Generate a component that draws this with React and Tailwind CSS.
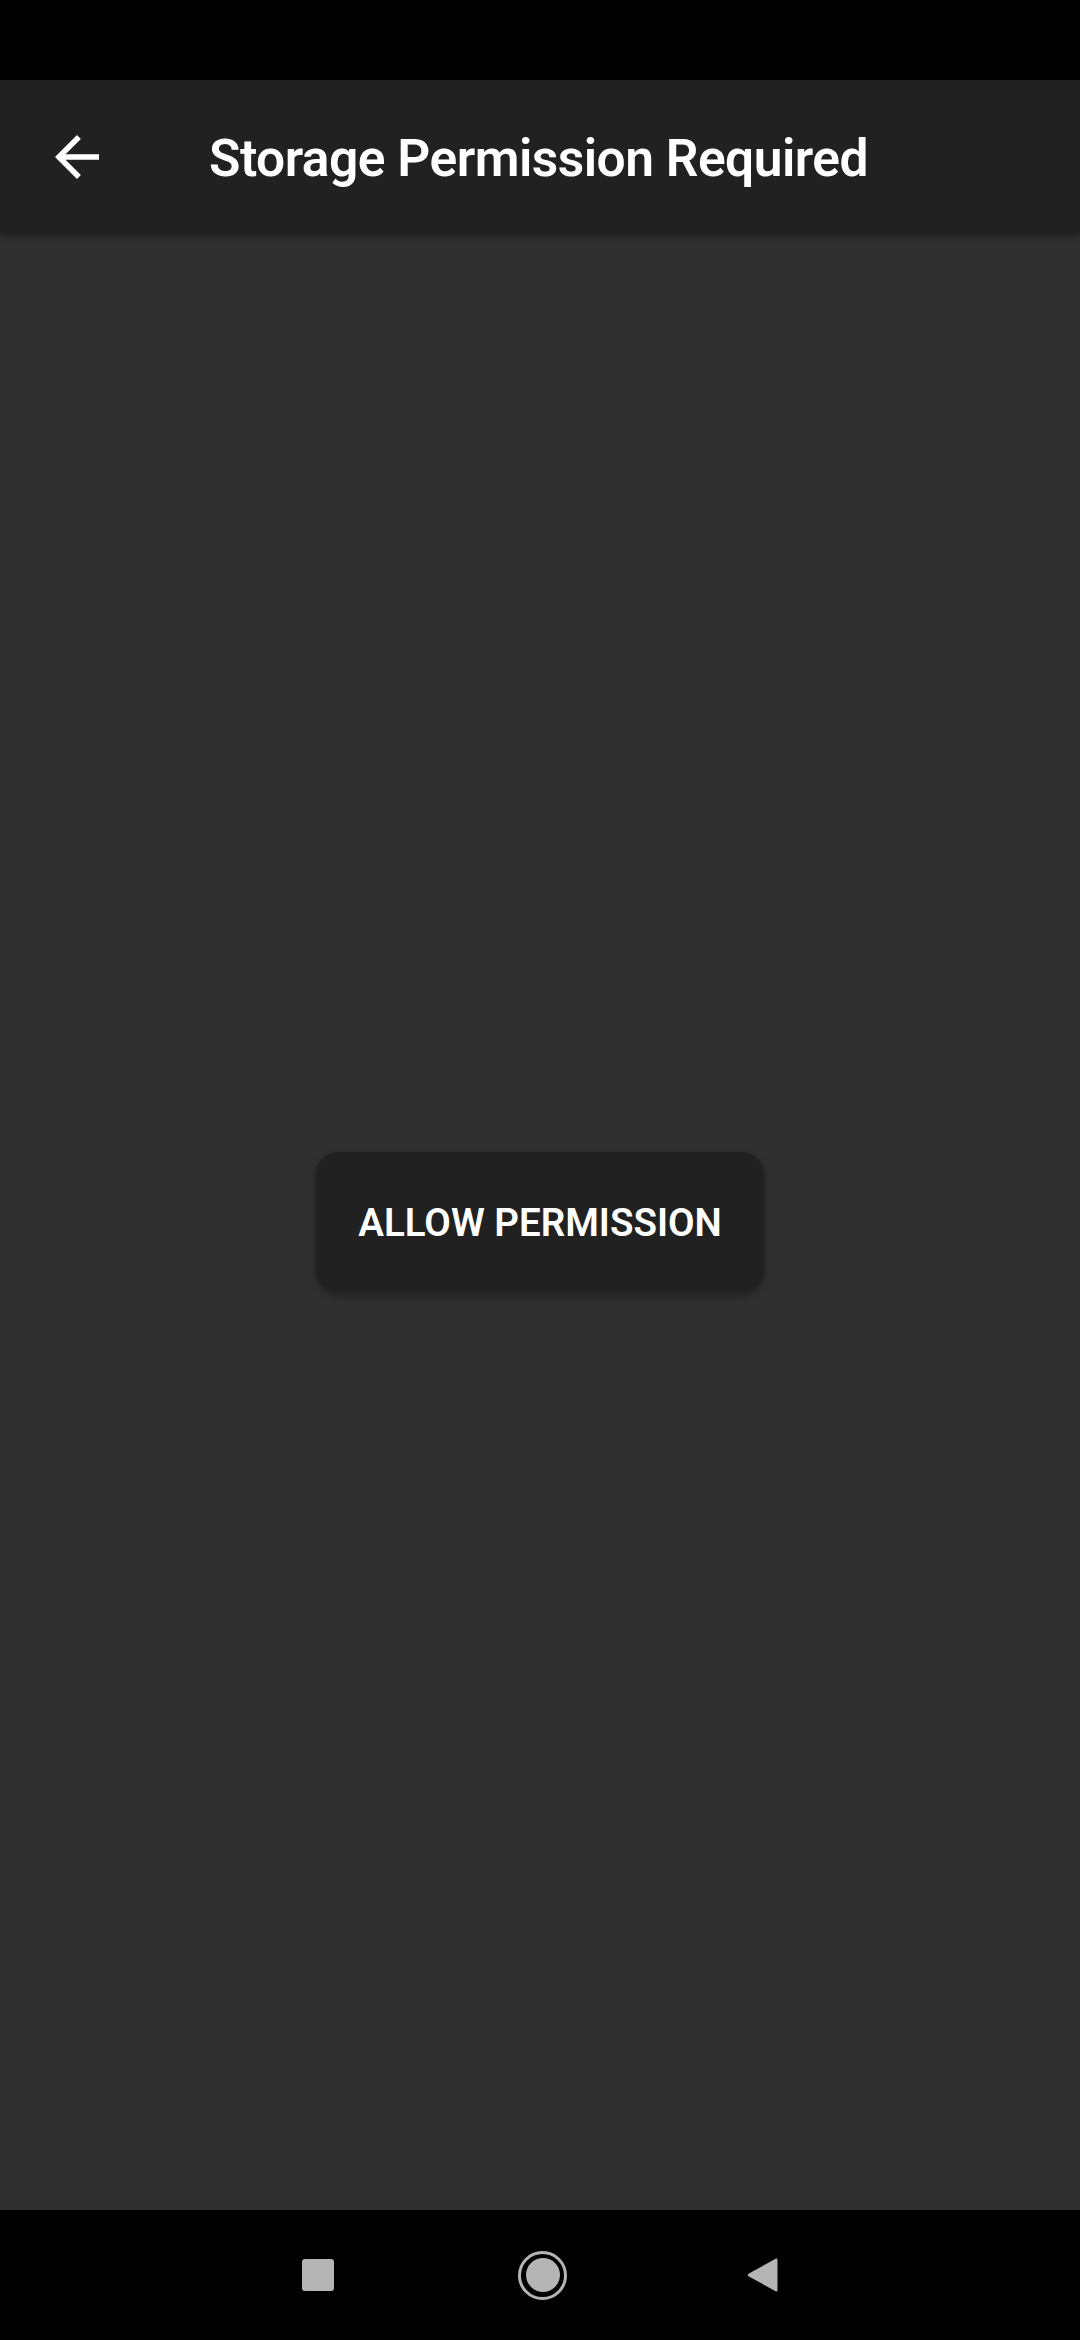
import React from "react";

export default function App() {
  return (
    <div className="w-[1080px] h-[2340px] flex flex-col bg-[#303030] overflow-hidden">
      <div className="h-[80px] bg-black shrink-0" />
      <div className="h-[153px] bg-[#212121] shrink-0 flex items-center shadow-[0_3px_6px_rgba(0,0,0,0.35)] relative z-10">
        <div className="ml-[44px] w-[66px] h-[66px] flex items-center justify-center">
          <svg width="66" height="66" viewBox="0 0 24 24" fill="#ffffff">
            <path d="M20 11H7.83l5.59-5.59L12 4l-8 8 8 8 1.41-1.41L7.83 13H20v-2z" />
          </svg>
        </div>
        <div
          className="ml-[99px] mt-[5px] text-white text-[51.5px] font-semibold leading-none tracking-[-0.01em]"
          style={{ fontFamily: "Roboto, 'Noto Sans', sans-serif" }}
        >
          Storage Permission Required
        </div>
      </div>
      <div className="flex-1 flex items-center justify-center">
        <div className="w-[448px] h-[140px] rounded-[22px] bg-[#212121] shadow-[0_4px_10px_rgba(0,0,0,0.3)] flex items-center justify-center">
          <span
            className="text-white text-[38.5px] font-semibold leading-none mt-[3px]"
            style={{ fontFamily: "Roboto, 'Noto Sans', sans-serif" }}
          >
            ALLOW PERMISSION
          </span>
        </div>
      </div>
      <div className="h-[130px] bg-black shrink-0 flex items-center justify-center">
        <div className="flex items-center">
          <div className="w-[32px] h-[32px] rounded-[3px] bg-[#b5b5b5]" />
          <div className="ml-[184px] w-[49px] h-[49px] rounded-full border-[3px] border-[#b5b5b5] flex items-center justify-center">
            <div className="w-[34px] h-[34px] rounded-full bg-[#b5b5b5]" />
          </div>
          <svg className="ml-[180px]" width="31" height="36" viewBox="0 0 31 36">
            <path d="M29 1.5 Q30.5 1 30.5 3 L30.5 33 Q30.5 35 29 34.5 L1.5 19.2 Q0 18 1.5 16.8 Z" fill="#b5b5b5" />
          </svg>
        </div>
      </div>
    </div>
  );
}
